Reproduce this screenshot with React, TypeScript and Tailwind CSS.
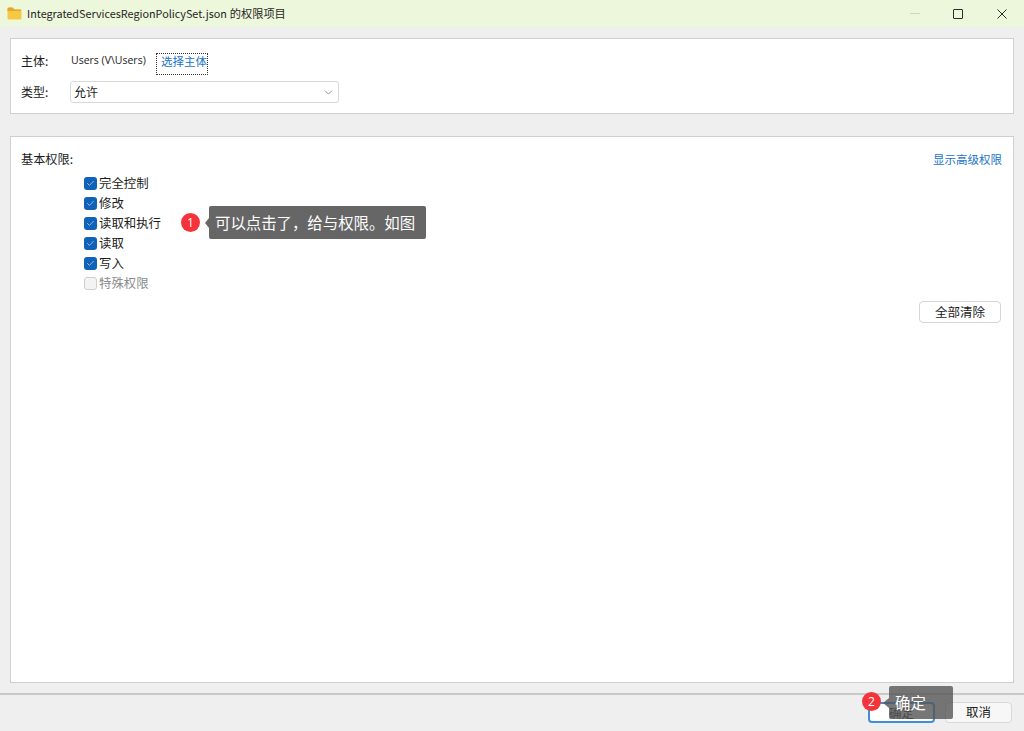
import React from 'react';
import { Check, ChevronDown } from 'lucide-react';

const font = { fontFamily: '"Noto Sans CJK SC", sans-serif' };

const perms = [
  { label: '完全控制', checked: true },
  { label: '修改', checked: true },
  { label: '读取和执行', checked: true },
  { label: '读取', checked: true },
  { label: '写入', checked: true },
  { label: '特殊权限', checked: false },
];

const PermRow = ({ label, checked }: { label: string; checked: boolean }) => (
  <div className="flex h-[20.1px] items-center">
    {checked ? (
      <span className="flex h-[13px] w-[13px] items-center justify-center rounded-[3px] bg-[#0f62b8]">
        <Check size={9} color="#b9d3ee" strokeWidth={2} />
      </span>
    ) : (
      <span className="h-[13px] w-[13px] rounded-[3px] border border-[#cfcfcf] bg-[#f3f3f3]" />
    )}
    <span className={`ml-[2px] text-[12.4px] ${checked ? 'text-[#1c1c1c]' : 'text-[#8a8a8a]'}`}>{label}</span>
  </div>
);

const Badge = ({ n }: { n: number }) => (
  <span className="flex h-[19px] w-[19px] items-center justify-center rounded-full bg-[#f5333b] text-[12px] text-white" style={{ fontFamily: '"Open Sans", sans-serif' }}>{n}</span>
);

export default function App() {
  return (
    <div className="relative flex h-[731px] w-[1024px] flex-col overflow-hidden bg-[#efefef]" style={font}>
      {/* title bar */}
      <div className="flex h-[27px] shrink-0 items-center bg-[#edf7dc] pl-[7px]">
        <svg width="15" height="13" viewBox="0 0 15 13">
          <path d="M0.5 2 Q0.5 0.5 2 0.5 H5.5 L7.5 2.5 H13 Q14.5 2.5 14.5 4 V11 Q14.5 12.5 13 12.5 H2 Q0.5 12.5 0.5 11 Z" fill="#f6c945" />
          <path d="M0.5 2 Q0.5 0.5 2 0.5 H5.5 L7.5 2.5 H14 V4 H0.5 Z" fill="#e2a72e" />
        </svg>
        <span className="ml-[5px] text-[10.8px] text-[#1f1f1f]">IntegratedServicesRegionPolicySet.json</span>
        <span className="ml-[3px] text-[11.2px] text-[#1f1f1f]">的权限项目</span>
        <div className="ml-auto flex items-center">
          <span className="mr-[33px] h-px w-[10px] bg-[#cdd6c2]" />
          <span className="mr-[34px] h-[10px] w-[10px] rounded-[1px] border border-[#2b2b2b]" />
          <svg width="10" height="10" viewBox="0 0 10 10" className="mr-[17px]">
            <path d="M0.5 0.5 L9.5 9.5 M9.5 0.5 L0.5 9.5" stroke="#2b2b2b" strokeWidth="1" />
          </svg>
        </div>
      </div>

      {/* principal */}
      <div className="mx-[10px] mt-[11px] h-[76px] shrink-0 border border-[#cfcfcf] bg-white pl-[10px]">
        <div className="mt-[10px] flex h-[23px] items-center">
          <span className="w-[50px] text-[12px] text-[#1c1c1c]">主体:</span>
          <span className="w-[85px] pt-px text-[10.5px] text-[#1c1c1c]" style={{ fontFamily: '"Open Sans", sans-serif' }}>Users (V\Users)</span>
          <span className="mt-[4px] h-[22px] w-[52px] self-start border border-dotted border-[#333] text-right text-[11.5px] leading-[14px] text-[#1a73c8]">选择主体</span>
        </div>
        <div className="mt-[9px] flex items-center">
          <span className="w-[49px] text-[12px] text-[#1c1c1c]">类型:</span>
          <div className="flex h-[22px] w-[269px] items-center justify-between rounded-[3px] border border-[#d8d8d8] bg-white pl-[3px] pr-[3px]">
            <span className="text-[12px] text-[#1c1c1c]">允许</span>
            <ChevronDown size={13} color="#666" strokeWidth={1.3} />
          </div>
        </div>
      </div>

      {/* permissions */}
      <div className="mx-[10px] mt-[22px] flex h-[547px] shrink-0 flex-col border border-[#cfcfcf] bg-white pl-[10px] pr-[11px]">
        <div className="mt-[13px] flex h-[19px] items-center justify-between">
          <span className="text-[12.2px] text-[#1c1c1c]">基本权限:</span>
          <span className="text-[11.5px] text-[#1a73c8]">显示高级权限</span>
        </div>
        <div className="ml-[63px] mt-[4px] flex flex-col">
          {perms.map((p) => (
            <PermRow key={p.label} label={p.label} checked={p.checked} />
          ))}
        </div>
        <div className="mt-[7px] flex justify-end">
          <button className="mr-px h-[22px] w-[82px] rounded-[4px] border border-[#d4d4d4] bg-white pt-px text-[12.5px] text-[#1c1c1c]">全部清除</button>
        </div>
      </div>

      {/* footer */}
      <div className="mt-[10px] flex h-[38px] shrink-0 justify-end border-t-2 border-[#c9c9c9] pr-[12px] pt-[7px]">
        <button className="h-[21px] w-[67px] rounded-[4px] border-2 border-[#3f8fd6] bg-white text-[12.5px] text-[#1c1c1c]">确定</button>
        <button className="ml-[10px] h-[21px] w-[67px] rounded-[4px] border border-[#d8d8d8] bg-[#f7f7f7] text-[12.5px] text-[#1c1c1c]">取消</button>
      </div>

      {/* tutorial callouts */}
      <div className="absolute left-[181px] top-[206px] flex items-center">
        <Badge n={1} />
        <span className="ml-[5px] h-0 w-0 border-y-[5px] border-r-[4px] border-y-transparent border-r-[#666]" />
        <span className="flex h-[33px] w-[217px] items-center rounded-[2px] bg-[#666] pl-[6px] text-[15.4px] text-white">可以点击了，给与权限。如图</span>
      </div>
      <div className="absolute left-[862px] top-[686px] flex items-start">
        <div className="mt-[6px]">
          <Badge n={2} />
        </div>
        <span className="ml-[2px] mt-[12px] h-0 w-0 border-y-[5px] border-r-[6px] border-y-transparent border-r-[#555]/80" />
        <span className="flex h-[33px] w-[64px] items-center rounded-[2px] bg-[#555]/80 pl-[6px] text-[15.4px] text-white">确定</span>
      </div>
    </div>
  );
}
